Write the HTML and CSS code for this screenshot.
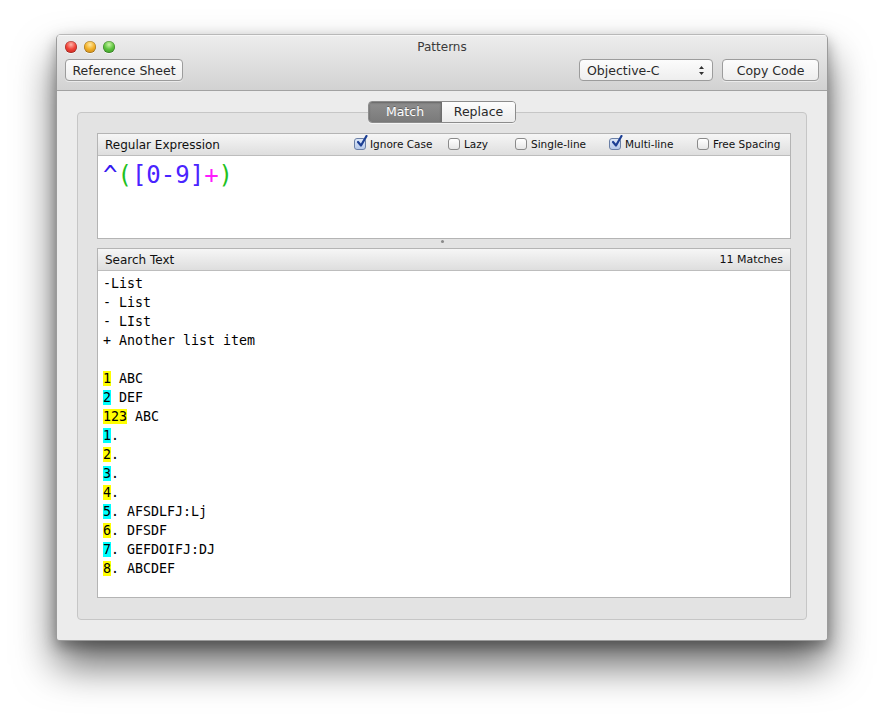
FILE: index.html
```html
<!DOCTYPE html>
<html>
<head>
<meta charset="utf-8">
<title>Patterns</title>
<link rel="stylesheet" href="styles.css">
</head>
<body>
<div class="stage">
  <div class="window">
    <div class="toolbar">
      <div class="titlebar">
        <div class="lights">
          <span class="light red"></span>
          <span class="light yellow"></span>
          <span class="light green"></span>
        </div>
        <div class="title">Patterns</div>
      </div>
      <div class="tools">
        <button class="btn ref">Reference Sheet</button>
        <div class="spacer"></div>
        <div class="popup">
          <span>Objective-C</span>
          <svg class="arrows" width="7" height="11" viewBox="0 0 7 11"><path d="M3.5 1 L6 4 L1 4 Z M3.5 10 L6 7 L1 7 Z" fill="#333"/></svg>
        </div>
        <button class="btn copy">Copy Code</button>
      </div>
    </div>
    <div class="content">
      <div class="segmented">
        <span class="seg on">Match</span>
        <span class="seg">Replace</span>
      </div>
      <div class="tabbox">
        <div class="panel regex">
          <div class="phead">
            <span class="plabel">Regular Expression</span>
            <div class="opts">
              <label class="opt o1"><span class="cb checked"><svg width="14" height="14" viewBox="0 0 14 14"><path d="M3 7 L6 10.5 L11.5 1" fill="none" stroke="#1c3f94" stroke-width="2.2" stroke-linecap="round" stroke-linejoin="round"/></svg></span>Ignore Case</label>
              <label class="opt o2"><span class="cb"></span>Lazy</label>
              <label class="opt o3"><span class="cb"></span>Single-line</label>
              <label class="opt o4"><span class="cb checked"><svg width="14" height="14" viewBox="0 0 14 14"><path d="M3 7 L6 10.5 L11.5 1" fill="none" stroke="#1c3f94" stroke-width="2.2" stroke-linecap="round" stroke-linejoin="round"/></svg></span>Multi-line</label>
              <label class="opt o5"><span class="cb"></span>Free Spacing</label>
            </div>
          </div>
          <div class="pbody regbody"><span class="c-anchor">^</span><span class="c-group">(</span><span class="c-class">[0-9]</span><span class="c-quant">+</span><span class="c-group">)</span></div>
        </div>
        <div class="splitter"><span class="grip"></span></div>
        <div class="panel search">
          <div class="phead">
            <span class="plabel">Search Text</span>
            <span class="count">11 Matches</span>
          </div>
          <div class="pbody textbody">
<div class="ln">-List</div>
<div class="ln">- List</div>
<div class="ln">- LIst</div>
<div class="ln">+ Another list item</div>
<div class="ln">&nbsp;</div>
<div class="ln"><span class="hy">1</span> ABC</div>
<div class="ln"><span class="hc">2</span> DEF</div>
<div class="ln"><span class="hy">123</span> ABC</div>
<div class="ln"><span class="hc">1</span>.</div>
<div class="ln"><span class="hy">2</span>.</div>
<div class="ln"><span class="hc">3</span>.</div>
<div class="ln"><span class="hy">4</span>.</div>
<div class="ln"><span class="hc">5</span>. AFSDLFJ:Lj</div>
<div class="ln"><span class="hy">6</span>. DFSDF</div>
<div class="ln"><span class="hc">7</span>. GEFDOIFJ:DJ</div>
<div class="ln"><span class="hy">8</span>. ABCDEF</div>
          </div>
        </div>
      </div>
    </div>
  </div>
</div>
</body>
</html>
```
FILE: styles.css
```css
* { box-sizing: border-box; }
html, body { margin: 0; padding: 0; background: #ffffff; }
body { font-family: "DejaVu Sans", "Liberation Sans", sans-serif; color: #1a1a1a; }

.stage { padding: 34px 0 0 56px; width: 884px; height: 719px; overflow: hidden; }

.window {
  width: 772px;
  height: 607px;
  display: flex;
  flex-direction: column;
  background: #ececec;
  border: 1px solid #9b9b9b;
  border-top-color: #b8b8b8;
  border-radius: 5px 5px 3px 3px;
  box-shadow: 0 24px 40px rgba(0,0,0,0.6), 0 6px 14px rgba(0,0,0,0.3);
  overflow: hidden;
}

.toolbar {
  height: 56px;
  background: linear-gradient(#ededed, #d2d2d2);
  border-bottom: 1px solid #a2a2a2;
  display: flex;
  flex-direction: column;
  box-shadow: inset 0 1px 0 #f7f7f7;
}
.titlebar { height: 22px; position: relative; display: flex; align-items: center; }
.lights { display: flex; gap: 7px; padding-left: 8px; padding-top: 1px; }
.light {
  width: 12px; height: 12px; border-radius: 50%;
  box-shadow: inset 0 0 0 0.5px rgba(0,0,0,0.35), 0 1px 0 rgba(255,255,255,0.6);
}
.light.red { background: radial-gradient(circle at 50% 30%, #ffb3a8 0, #f0443a 45%, #b81d14 100%); }
.light.yellow { background: radial-gradient(circle at 50% 30%, #ffe9a0 0, #f3b12a 45%, #b77810 100%); }
.light.green { background: radial-gradient(circle at 50% 30%, #c9f5a4 0, #5fc440 45%, #2d8a1c 100%); }
.title {
  position: absolute; left: 0; right: 0; top: 5px;
  text-align: center; font-size: 12px; color: #3a3a3a;
}

.tools { display: flex; align-items: center; padding: 2px 8px 0 8px; height: 24px; }
.spacer { flex: 1; }
.btn {
  font-family: "DejaVu Sans", "Liberation Sans", sans-serif;
  font-size: 12.5px;
  color: #2a2a2a;
  height: 22px;
  padding: 0;
  white-space: nowrap;
  border: 1px solid #9c9c9c;
  border-radius: 4px;
  background: linear-gradient(#fcfcfc, #eeeeee);
  box-shadow: 0 1px 0 rgba(255,255,255,0.5);
}
.btn.ref { width: 118px; }
.btn.copy { width: 97px; margin-left: 9px; }
.popup {
  width: 134px; height: 22px;
  display: flex; align-items: center; justify-content: space-between;
  padding: 0 7px 0 7px;
  font-size: 12.5px; color: #2a2a2a;
  border: 1px solid #9c9c9c; border-radius: 4px;
  background: linear-gradient(#fcfcfc, #eeeeee);
}

.content { flex: 1; display: flex; flex-direction: column; padding: 10px 20px 20px 20px; }

.segmented {
  position: relative; z-index: 2;
  align-self: center;
  display: flex; height: 22px;
  border: 1px solid #8c8c8c; border-radius: 4px; overflow: hidden;
  box-shadow: 0 1px 0 rgba(255,255,255,0.6);
}
.seg {
  width: 73px; text-align: center; font-size: 12.5px; line-height: 20px;
  background: linear-gradient(#fdfdfd, #ececec); color: #2a2a2a;
}
.seg.on {
  background: linear-gradient(#8e8e8e, #7a7a7a); color: #ffffff;
  border-right: 1px solid #6e6e6e;
  box-shadow: inset 0 1px 2px rgba(0,0,0,0.3);
  text-shadow: 0 -1px 0 rgba(0,0,0,0.3);
}

.tabbox {
  flex: 1;
  margin-top: -11px;
  background: #e3e3e3;
  border: 1px solid #c6c6c6;
  border-radius: 4px;
  padding: 20px 15px 21px 19px;
  display: flex; flex-direction: column;
}

.panel { border: 1px solid #b4b4b4; background: #ffffff; display: flex; flex-direction: column; }
.panel.regex { height: 106px; }
.panel.search { flex: 1; }
.phead {
  height: 22px; flex: none;
  display: flex; align-items: center; justify-content: space-between;
  padding: 0 7px 0 7px;
  background: linear-gradient(#f6f6f6, #dedede);
  border-bottom: 1px solid #bdbdbd;
}
.plabel { font-size: 12px; color: #111; }
.count { font-size: 11px; color: #111; }

.opts { position: relative; height: 22px; width: 435px; }
.opt { position: absolute; top: 4px; display: flex; align-items: center; font-size: 10.5px; color: #111; }
.o1 { left: 6px; }
.o2 { left: 100px; }
.o3 { left: 167px; }
.o4 { left: 261px; }
.o5 { left: 349px; }
.cb {
  position: relative;
  width: 12px; height: 12px; margin-right: 4px;
  border: 1px solid #8a8a8a; border-radius: 3px;
  background: linear-gradient(#ffffff, #e6e6e6);
}
.cb.checked { background: linear-gradient(#dfe9f8, #b6c9ea); border-color: #6a7fa6; }
.cb svg { position: absolute; left: 0px; top: -4px; }

.pbody { flex: 1; background: #fff; }
.regbody {
  font-family: "DejaVu Sans Mono", "Liberation Mono", monospace;
  font-size: 24px; line-height: 28px;
  padding: 5px 5px 0 5px;
}
.c-anchor { color: #3418f0; }
.c-group { color: #1fc21f; }
.c-class { color: #4a24ff; }
.c-quant { color: #ff1cff; }

.splitter { height: 9px; flex: none; position: relative; }
.grip {
  position: absolute; left: 344px; top: 1px;
  width: 3px; height: 3px; border-radius: 50%; background: #8a8a8a;
}

.textbody {
  font-family: "DejaVu Sans Mono", "Liberation Mono", monospace;
  font-size: 13.3px; line-height: 19px;
  padding: 3px 5px 0 5px; color: #000;
}
.ln { height: 19px; white-space: pre; }
.hy { background: #ffff00; }
.hc { background: #00ffff; }
```
